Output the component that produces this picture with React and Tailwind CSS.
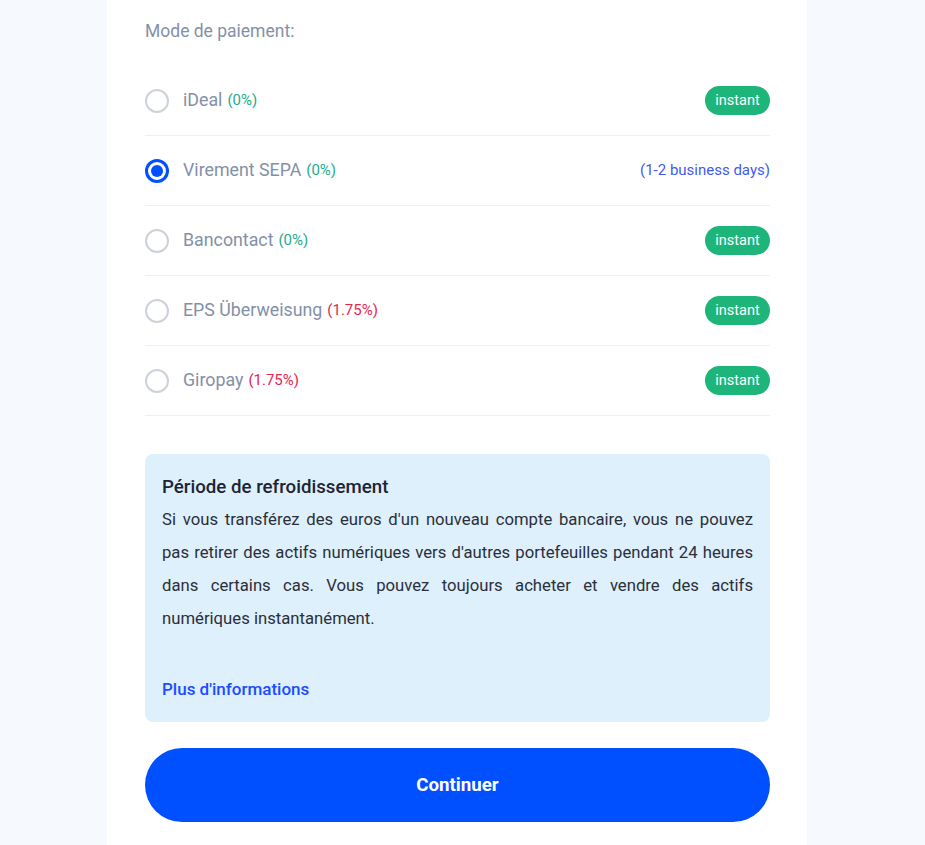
import React, { useState } from "react";

const methods = [
  { id: "ideal", name: "iDeal", fee: "(0%)", feeColor: "text-[#1eaa8c]", instant: true },
  { id: "sepa", name: "Virement SEPA", fee: "(0%)", feeColor: "text-[#1eaa8c]", instant: false },
  { id: "bancontact", name: "Bancontact", fee: "(0%)", feeColor: "text-[#1eaa8c]", instant: true },
  { id: "eps", name: "EPS Überweisung", fee: "(1.75%)", feeColor: "text-[#e5264f]", instant: true },
  { id: "giropay", name: "Giropay", fee: "(1.75%)", feeColor: "text-[#e5264f]", instant: true },
];

const App = () => {
  const [selected, setSelected] = useState("sepa");

  return (
    <div
      className="min-h-[845px] bg-[#f6f9fd] pl-[107px]"
      style={{ fontFamily: "Roboto, 'Noto Sans', sans-serif" }}
    >
      <div className="w-[700px] min-h-[845px] bg-white pl-[38px] pr-[37px] pt-[19px] pb-6">
        <p className="text-[17.5px] leading-6 text-[#8390a7]">Mode de paiement:</p>

        {/* liste des modes */}
        <ul className="mt-[23px]">
          {methods.map((m) => {
            const active = selected === m.id;
            return (
              <li
                key={m.id}
                onClick={() => setSelected(m.id)}
                className="h-[70px] flex items-center justify-between border-b border-[#eef0f3] cursor-pointer"
              >
                <div className="flex items-center">
                  {active ? (
                    <span className="w-6 h-6 rounded-full border-[3px] border-[#0050ff] flex items-center justify-center">
                      <span className="w-[12px] h-[12px] rounded-full bg-[#0050ff]" />
                    </span>
                  ) : (
                    <span className="w-6 h-6 rounded-full border-2 border-[#cdd1d9]" />
                  )}
                  <span className="ml-[14px] text-[17.8px] text-[#8390a7]">{m.name}</span>
                  <span className={`ml-[5px] text-[15px] ${m.feeColor}`}>{m.fee}</span>
                </div>
                {m.instant ? (
                  <span className="h-[29px] w-[65px] justify-center rounded-full bg-[#1db57a] text-white text-[14.5px] flex items-center">
                    instant
                  </span>
                ) : (
                  <span className="text-[15px] text-[#3f5bf0]">(1-2 business days)</span>
                )}
              </li>
            );
          })}
        </ul>

        {/* encart info */}
        <div className="mt-[38px] h-[268px] rounded-lg bg-[#dff0fd] px-[17px] pt-[21px]">
          <h3 className="text-[18.7px] font-medium leading-6 text-[#1c2433]">
            Période de refroidissement
          </h3>
          <p className="mt-[4px] text-[16.7px] leading-[33px] text-[#2a2f3a] text-justify">
            Si vous transférez des euros d'un nouveau compte bancaire, vous ne pouvez pas retirer
            des actifs numériques vers d'autres portefeuilles pendant 24 heures dans certains cas.
            Vous pouvez toujours acheter et vendre des actifs numériques instantanément.
          </p>
          <a href="#" className="block mt-[42px] text-[17px] leading-6 font-medium text-[#1a4dff]">
            Plus d'informations
          </a>
        </div>

        <button className="mt-[26px] w-full h-[74px] rounded-full bg-[#0050ff] text-white text-[18.7px] font-bold">
          Continuer
        </button>
      </div>
    </div>
  );
};

export default App;
